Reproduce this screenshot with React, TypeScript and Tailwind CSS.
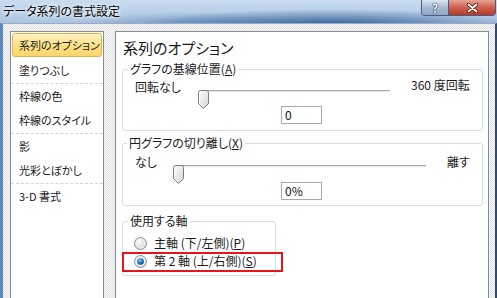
import React from 'react';

const menuItems = [
  { label: '系列のオプション', selected: true, sep: false },
  { label: '塗りつぶし', selected: false, sep: false },
  { label: '枠線の色', selected: false, sep: true },
  { label: '枠線のスタイル', selected: false, sep: false },
  { label: '影', selected: false, sep: true },
  { label: '光彩とぼかし', selected: false, sep: false },
  { label: '3-D 書式', selected: false, sep: true },
];

function Thumb() {
  return (
    <svg width="11" height="19" viewBox="0 0 11 19" className="block">
      <defs>
        <linearGradient id="thumbFill" x1="0" y1="0" x2="1" y2="1">
          <stop offset="0" stopColor="#ffffff" />
          <stop offset="1" stopColor="#d4d4d4" />
        </linearGradient>
      </defs>
      <path
        d="M0.5 2.5Q0.5 0.5 2.5 0.5H8.5Q10.5 0.5 10.5 2.5V13.5L5.5 18.5L0.5 13.5Z"
        fill="url(#thumbFill)"
        stroke="#7b7b7b"
      />
      <path d="M1.5 3V13L5.5 17" fill="none" stroke="#ffffff" strokeOpacity="0.8" />
    </svg>
  );
}

function Slider({ width }: { width: number }) {
  return (
    <div className="relative h-[19px] shrink-0" style={{ width }}>
      <div className="ml-[3px] mt-[8px] h-px bg-[#a8a8a8]" />
      <div className="ml-[3px] h-px bg-[#e6e6e6]" />
      <div className="absolute left-0 top-0">
        <Thumb />
      </div>
    </div>
  );
}

function Radio({ checked }: { checked: boolean }) {
  return (
    <svg width="13" height="13" viewBox="0 0 13 13" className="block shrink-0">
      <defs>
        <radialGradient id="radioBg" cx="0.4" cy="0.35" r="0.7">
          <stop offset="0" stopColor="#fafafa" />
          <stop offset="1" stopColor="#cfcfcf" />
        </radialGradient>
        <radialGradient id="radioDot" cx="0.4" cy="0.35" r="0.7">
          <stop offset="0" stopColor="#8fd0ff" />
          <stop offset="0.5" stopColor="#2a7dc6" />
          <stop offset="1" stopColor="#0d3f7a" />
        </radialGradient>
      </defs>
      <circle cx="6.5" cy="6.5" r="6" fill="url(#radioBg)" stroke="#8e8f8f" />
      <circle cx="6.5" cy="6.5" r="4.5" fill="none" stroke="#f4f4f4" />
      {checked && <circle cx="6.5" cy="6.5" r="3.3" fill="url(#radioDot)" />}
    </svg>
  );
}

function TextBox({ value }: { value: string }) {
  return (
    <div className="ml-[146px] w-[41px] h-[18px] border border-[#a6a9b0] bg-white pl-[3px] text-[12px] leading-[16px] text-[#111]">
      {value}
    </div>
  );
}

export default function App() {
  return (
    <div className="w-[497px] h-[298px] overflow-hidden flex flex-col font-['Noto_Sans_CJK_JP','Noto_Sans',sans-serif] [font-feature-settings:'palt'] text-[#1b1b1b]">
      {/* title bar */}
      <div className="h-[23px] shrink-0 flex items-start justify-between bg-[radial-gradient(ellipse_190px_16px_at_330px_25px,#2f5f96,transparent),radial-gradient(ellipse_120px_14px_at_190px_26px,#6f95c2,transparent),linear-gradient(#cadcf0,#aac4e2)]">
        <div className="pl-[3px] pt-[2px] text-[12px] leading-[17px] text-black [text-shadow:0_0_5px_#fff,0_0_3px_#fff]">
          データ系列の書式設定
        </div>
        <div className="flex mr-[1px] rounded-b-[4px] overflow-hidden border border-t-0 border-[#4a5d78]">
          <div className="w-[27px] h-[15px] flex items-center justify-center bg-[linear-gradient(#dbe6f3,#a7bad3_50%,#8fa6c4)] border-r border-[#4a5d78] text-[12px] font-bold leading-none text-white [text-shadow:0_0_1px_#1f2d42,0_0_1px_#1f2d42,0_0_1px_#1f2d42]">
            ?
          </div>
          <div className="w-[46px] h-[15px] flex items-center justify-center bg-[linear-gradient(#e9a195,#d0604d_50%,#b8392a)]">
            <svg width="11" height="10" viewBox="0 0 11 10">
              <path d="M1.5 1.5L9.5 8.5M9.5 1.5L1.5 8.5" stroke="#3a1812" strokeWidth="3.4" strokeLinecap="round" />
              <path d="M1.5 1.5L9.5 8.5M9.5 1.5L1.5 8.5" stroke="#ffffff" strokeWidth="1.8" strokeLinecap="round" />
            </svg>
          </div>
        </div>
      </div>

      {/* body */}
      <div className="flex-1 flex items-start gap-[11px] pl-[7px] pr-[6px] pt-[7px] border-l-[3px] border-l-[#5a87bf] border-r-[2px] border-r-[#2d4a70] border-t border-t-[#9aabc1] bg-[repeating-conic-gradient(#e3e3e3_0_25%,#f7f7f7_0_50%)] bg-[length:2px_2px]">
        {/* left menu */}
        <div className="w-[94px] h-[290px] shrink-0 border border-[#878b92] bg-white pt-[1px] text-[11px]">
          {menuItems.map((item) =>
            item.selected ? (
              <div
                key={item.label}
                className="mx-[1px] mb-[1px] h-[24px] flex items-center pl-[6px] rounded-[3px] border border-[#e2b24c] bg-[linear-gradient(#fff3c2,#fde28a_50%,#fbd56a)] whitespace-nowrap"
              >
                {item.label}
              </div>
            ) : (
              <div
                key={item.label}
                className={`h-[25px] flex items-center pl-[8px] whitespace-nowrap ${item.sep ? 'border-t border-dashed border-[#d4d4d4]' : ''}`}
              >
                {item.label}
              </div>
            )
          )}
        </div>

        {/* right panel */}
        <div className="relative flex-1 h-[290px] border border-[#878b92] bg-white pt-[6px]">
          <div className="pl-[7px] text-[15px] leading-[20px] text-[#1a1a1a]">系列のオプション</div>

          <fieldset className="mt-[3px] ml-[6px] w-[361px] border border-[#d5dde5] rounded-[3px] pt-[1px] pb-[6px] text-[12px]">
            <legend className="ml-[5px] px-[2px] leading-[16px]">
              グラフの基線位置(<span className="underline">A</span>)
            </legend>
            <div className="flex items-start h-[22px] pl-[12px]">
              <div className="w-[63px] mt-[1px] leading-[16px]">回転なし</div>
              <div className="mt-[4px]">
                <Slider width={192} />
              </div>
              <div className="ml-[21px] -mt-[1px] leading-[16px] whitespace-nowrap">360 度回転</div>
            </div>
            <div className="mt-[6px] pl-[12px]">
              <TextBox value="0" />
            </div>
          </fieldset>

          <fieldset className="mt-[4px] ml-[6px] w-[361px] border border-[#d5dde5] rounded-[3px] pt-[2px] pb-[5px] text-[12px]">
            <legend className="ml-[4px] px-[2px] leading-[16px]">
              円グラフの切り離し(<span className="underline">X</span>)
            </legend>
            <div className="flex items-start h-[22px] pl-[12px]">
              <div className="w-[38px] mt-[1px] leading-[16px]">なし</div>
              <div className="mt-[4px]">
                <Slider width={253} />
              </div>
              <div className="ml-[21px] mt-[1px] leading-[16px] whitespace-nowrap">離す</div>
            </div>
            <div className="mt-[7px] pl-[12px]">
              <TextBox value="0%" />
            </div>
          </fieldset>

          <fieldset className="mt-[7px] ml-[6px] w-[154px] border border-[#d5dde5] rounded-[3px] pt-[5px] pb-[5px] pl-[11px] text-[12px]">
            <legend className="-ml-[6px] px-[2px] leading-[16px]">使用する軸</legend>
            <div className="flex items-center h-[18px] gap-[7px] whitespace-nowrap">
              <Radio checked={false} />
              <span>
                主軸 (下/左側)(<span className="underline">P</span>)
              </span>
            </div>
            <div className="flex items-center h-[18px] gap-[7px] whitespace-nowrap">
              <Radio checked />
              <span>
                第 2 軸 (上/右側)(<span className="underline">S</span>)
              </span>
            </div>
          </fieldset>

          {/* highlight annotation */}
          <div className="absolute left-[6px] top-[220px] w-[161px] h-[20px] border-2 border-[#e8141b]" />
        </div>
      </div>
    </div>
  );
}
